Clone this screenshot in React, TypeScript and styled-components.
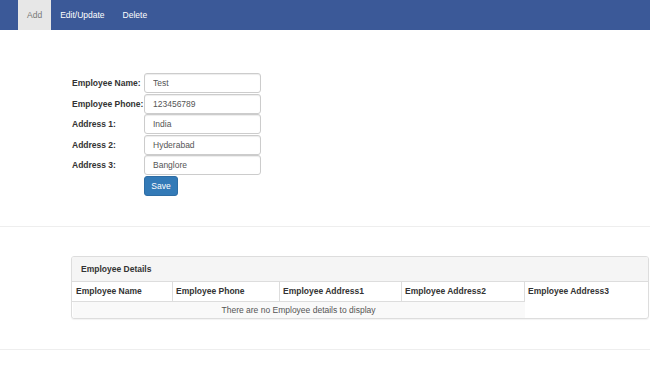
import React from "react";
import styled, { createGlobalStyle } from "styled-components";

const Global = createGlobalStyle`
  html, body { margin: 0; padding: 0; background: #fff; }
  body { font-family: "Liberation Sans", Arial, sans-serif; font-size: 8.5px; color: #333; }
  * { box-sizing: border-box; }
`;

const NavBar = styled.nav`
  height: 30px;
  background: #3b5998;
  display: flex;
  padding-left: 18px;
`;

const NavItem = styled.a<{ $active?: boolean }>`
  display: flex;
  align-items: center;
  padding: 0 9px;
  height: 30px;
  font-size: 8.5px;
  color: ${(p) => (p.$active ? "#777" : "#fff")};
  background: ${(p) => (p.$active ? "#e7e7e7" : "transparent")};
  text-decoration: none;
`;

const FormSection = styled.section`
  padding: 43px 0 0 72px;
`;

const Form = styled.form`
  display: grid;
  grid-template-columns: 72px 117px;
  row-gap: 0.5px;
  align-items: center;
`;

const Label = styled.label`
  font-weight: bold;
  font-size: 8.5px;
  color: #333;
  white-space: nowrap;
`;

const Input = styled.input`
  height: 20px;
  width: 117px;
  padding: 0 8px;
  border: 1px solid #ccc;
  border-radius: 3px;
  box-shadow: inset 0 1px 1px rgba(0, 0, 0, 0.075);
  font-family: inherit;
  font-size: 8.5px;
  color: #555;
  outline: none;
`;

const SaveButton = styled.button`
  grid-column: 2;
  justify-self: start;
  width: 34px;
  height: 20px;
  margin-top: 0.5px;
  padding: 0;
  border: 1px solid #2e6da4;
  border-radius: 3px;
  background: #337ab7;
  color: #fff;
  font-family: inherit;
  font-size: 8.5px;
`;

const Rule = styled.hr`
  margin: 30px 0 0;
  border: 0;
  border-top: 1px solid #eee;
`;

const PanelWrap = styled.div`
  padding: 29px 1px 0 71px;
`;

const Panel = styled.div`
  border: 1px solid #ddd;
  border-radius: 3px;
  box-shadow: 0 1px 1px rgba(0, 0, 0, 0.05);
  overflow: hidden;
`;

const PanelHeading = styled.div`
  height: 25px;
  display: flex;
  align-items: center;
  padding-left: 9px;
  background: #f5f5f5;
  border-bottom: 1px solid #ddd;
  font-weight: bold;
  font-size: 8.5px;
  color: #333;
`;

const Table = styled.table`
  width: 100%;
  border-collapse: collapse;
  table-layout: fixed;
`;

const Th = styled.th<{ $first?: boolean; $last?: boolean }>`
  text-align: left;
  font-weight: bold;
  font-size: 8.5px;
  color: #333;
  height: 19px;
  padding: 0 3px;
  border-left: 1px solid ${(p) => (p.$first ? "transparent" : "#ddd")};
  border-bottom: 1px solid ${(p) => (p.$last ? "transparent" : "#ddd")};
`;

const Td = styled.td`
  height: 17px;
  padding: 0;
  text-align: center;
  font-size: 8.5px;
  color: #555;
  background: #f9f9f9;
`;

const cols = [
  { label: "Employee Name", w: 100 },
  { label: "Employee Phone", w: 107 },
  { label: "Employee Address1", w: 122 },
  { label: "Employee Address2", w: 123 },
  { label: "Employee Address3", w: undefined },
];

const fields = [
  ["Employee Name:", "Test"],
  ["Employee Phone:", "123456789"],
  ["Address 1:", "India"],
  ["Address 2:", "Hyderabad"],
  ["Address 3:", "Banglore"],
];

export default function App() {
  return (
    <>
      <Global />
      <NavBar>
        <NavItem $active>Add</NavItem>
        <NavItem>Edit/Update</NavItem>
        <NavItem>Delete</NavItem>
      </NavBar>
      <FormSection>
        <Form onSubmit={(e) => e.preventDefault()}>
          {fields.map(([l, v]) => (
            <React.Fragment key={l}>
              <Label>{l}</Label>
              <Input defaultValue={v} />
            </React.Fragment>
          ))}
          <SaveButton type="submit">Save</SaveButton>
        </Form>
      </FormSection>
      <Rule />
      <PanelWrap>
        <Panel>
          <PanelHeading>Employee Details</PanelHeading>
          <Table>
            <colgroup>
              {cols.map((c) => (
                <col key={c.label} style={c.w ? { width: c.w } : undefined} />
              ))}
            </colgroup>
            <thead>
              <tr>
                {cols.map((c, i) => (
                  <Th key={c.label} $first={i === 0} $last={i === cols.length - 1}>
                    {c.label}
                  </Th>
                ))}
              </tr>
            </thead>
            <tbody>
              <tr>
                <Td colSpan={4}>There are no Employee details to display</Td>
                <td />
              </tr>
            </tbody>
          </Table>
        </Panel>
      </PanelWrap>
      <Rule />
    </>
  );
}
